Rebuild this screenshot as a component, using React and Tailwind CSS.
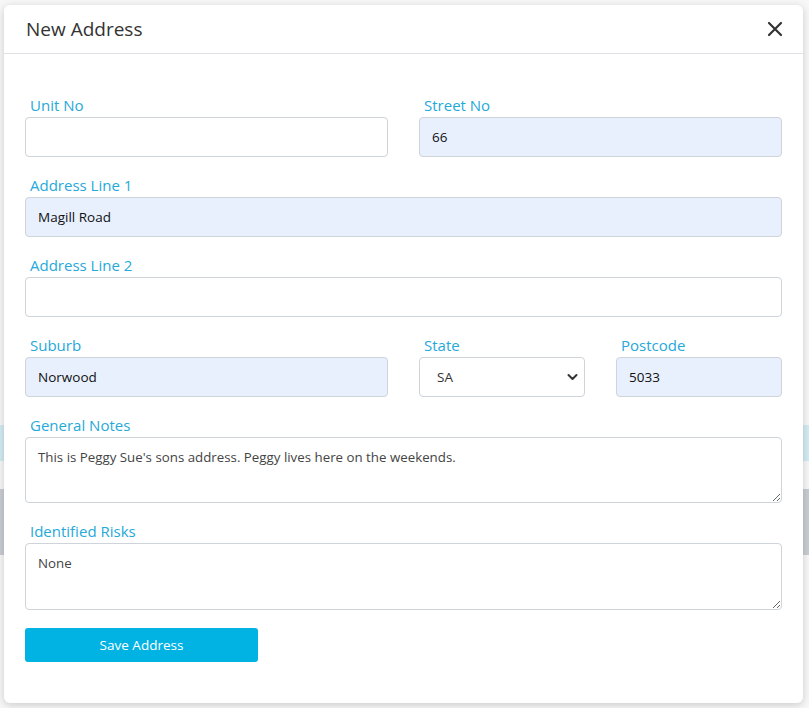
import React, { useState } from 'react';

const Label = ({ children }) => (
  <label className="block h-[20px] leading-[20px] mb-[2px] pl-[5px] text-[15px] text-[#25a9d9]">
    {children}
  </label>
);

const Field = ({ label, value, filled, className = '' }) => (
  <div className={className}>
    <Label>{label}</Label>
    <input
      type="text"
      defaultValue={value}
      className={`block w-full h-[40px] px-[12px] text-[13.5px] text-[#111] border border-[#ced4da] rounded-[4px] outline-none ${
        filled ? 'bg-[#e8f0fe]' : 'bg-white'
      }`}
    />
  </div>
);

const Area = ({ label, value, h }) => (
  <div>
    <Label>{label}</Label>
    <textarea
      defaultValue={value}
      className={`block w-full ${h} px-[12px] py-[10px] text-[13.3px] text-[#444] border border-[#ced4da] rounded-[4px] bg-white outline-none`}
    />
  </div>
);

export default function App() {
  const [state, setState] = useState('SA');

  return (
    <div className="relative w-[809px] h-[708px] overflow-hidden bg-[#f7f7f7] font-['Open_Sans',sans-serif]">
      {/* faint page behind the dialog */}
      <div className="flex flex-col pt-[425px]">
        <div className="h-[36px] bg-[#d3ebf3]" />
        <div className="h-[28px]" />
        <div className="h-[66px] bg-[#c9ccd1]" />
      </div>

      <div className="absolute left-[4px] top-[5px] w-[799px] h-[698px] bg-white rounded-[6px] shadow-[0_2px_8px_rgba(0,0,0,0.18)] flex flex-col">
        <div className="h-[49px] flex items-center justify-between pl-[22px] pr-[20px] border-b border-[#dee2e6]">
          <h1 className="text-[19px] text-[#333] font-normal">New Address</h1>
          <button className="text-[#333]">
            <svg width="16" height="16" viewBox="0 0 16 16" fill="none" stroke="currentColor" strokeWidth="2.2" strokeLinecap="round">
              <path d="M2 2l12 12M14 2L2 14" />
            </svg>
          </button>
        </div>

        <form className="px-[21px] pt-[41px] flex flex-col gap-[18px]" onSubmit={(e) => e.preventDefault()}>
          <div className="grid grid-cols-2 gap-x-[31px]">
            <Field label="Unit No" value="" />
            <Field label="Street No" value="66" filled />
          </div>
          <Field label="Address Line 1" value="Magill Road" filled />
          <Field label="Address Line 2" value="" />
          <div className="grid grid-cols-[363px_166px_166px] gap-x-[31px]">
            <Field label="Suburb" value="Norwood" filled />
            <div>
              <Label>State</Label>
              <div className="relative">
                <select
                  value={state}
                  onChange={(e) => setState(e.target.value)}
                  className="block w-full h-[40px] pl-[17px] pr-[30px] text-[13.5px] text-[#333] border border-[#ced4da] rounded-[4px] bg-white appearance-none outline-none"
                >
                  <option>SA</option>
                  <option>NSW</option>
                  <option>VIC</option>
                  <option>QLD</option>
                  <option>WA</option>
                  <option>TAS</option>
                </select>
                <svg className="absolute right-[7px] top-[16px] pointer-events-none" width="11" height="8" viewBox="0 0 11 8" fill="none" stroke="#333" strokeWidth="2" strokeLinecap="round" strokeLinejoin="round">
                  <path d="M1.5 2l4 4 4-4" />
                </svg>
              </div>
            </div>
            <Field label="Postcode" value="5033" filled />
          </div>
          <Area label="General Notes" value="This is Peggy Sue's sons address. Peggy lives here on the weekends." h="h-[66px]" />
          <Area label="Identified Risks" value="None" h="h-[67px]" />
          <div>
            <button
              type="submit"
              className="w-[233px] h-[34px] rounded-[3px] bg-[#00b3e3] text-white text-[13.5px]"
            >
              Save Address
            </button>
          </div>
        </form>
      </div>
    </div>
  );
}
